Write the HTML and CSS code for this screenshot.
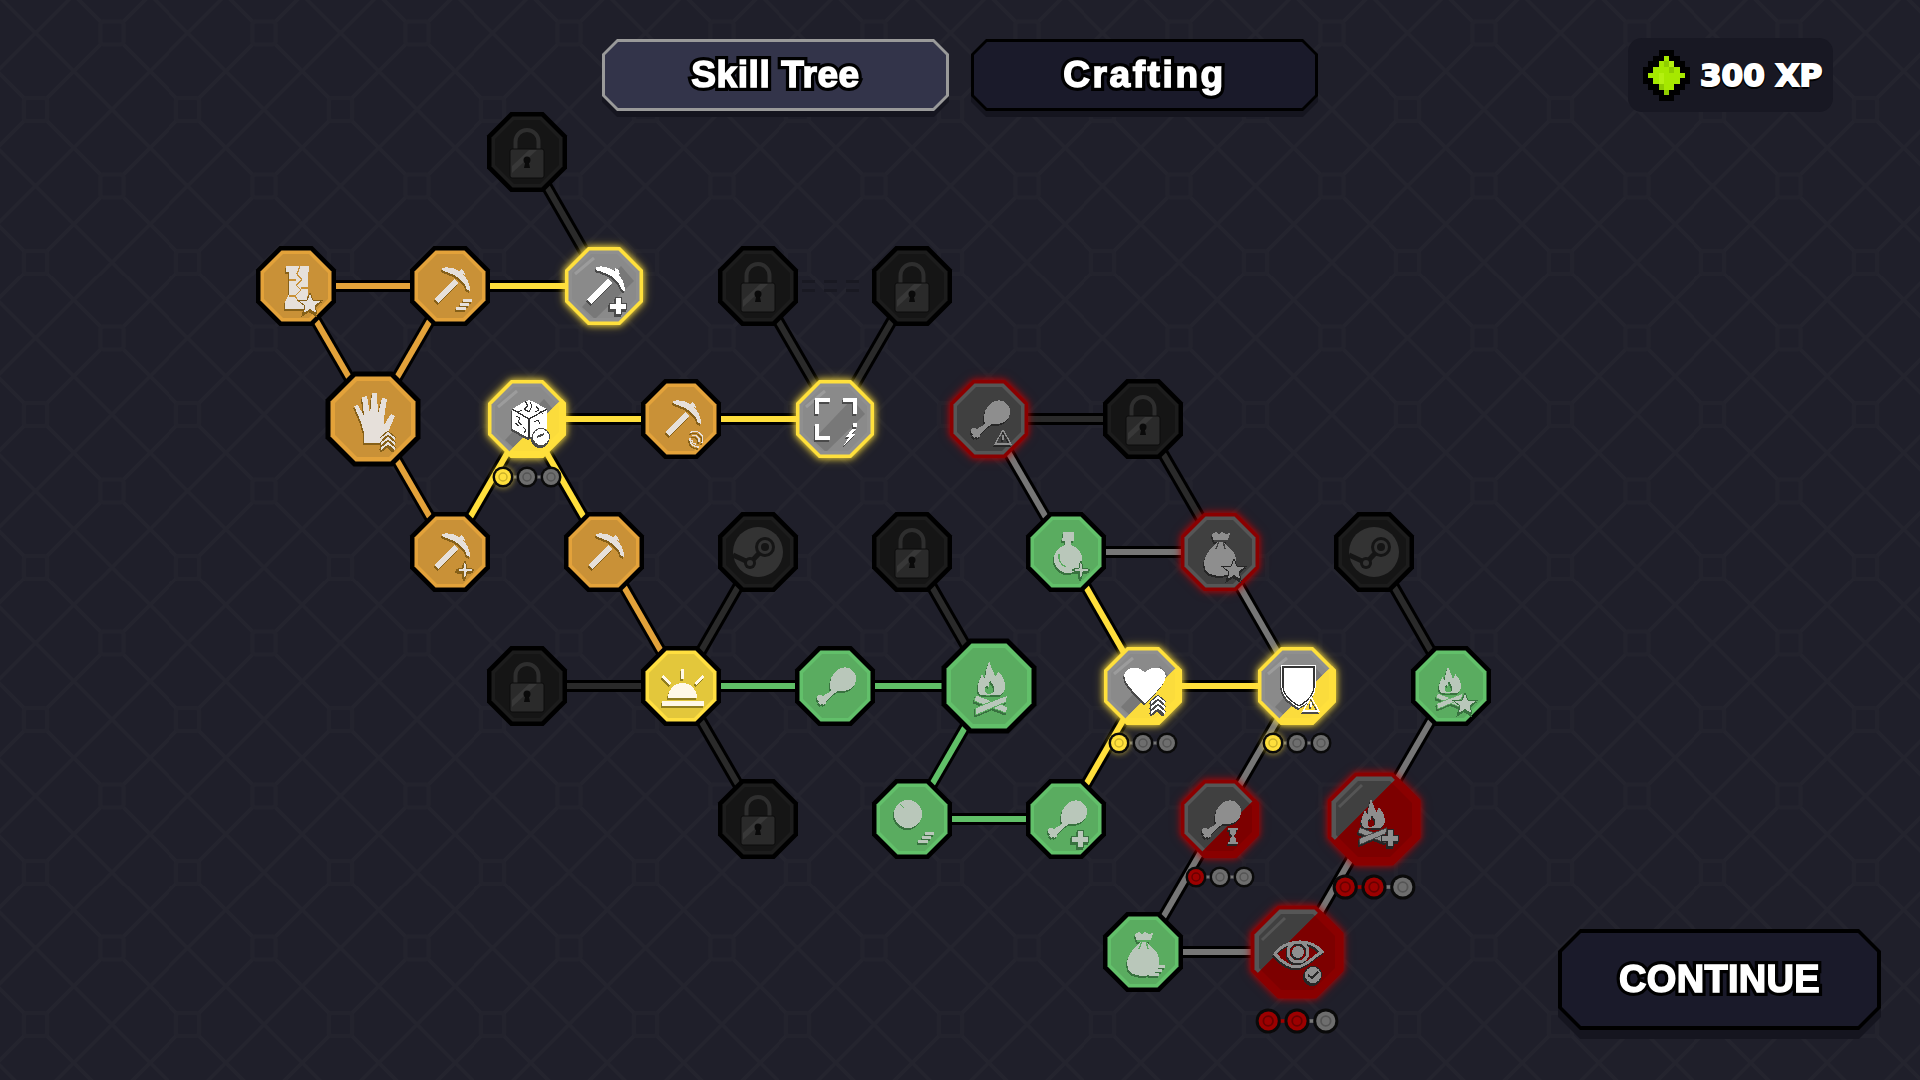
FILE: index.html
```html
<!DOCTYPE html>
<html lang="en">
<head>
    <meta charset="UTF-8">
    <meta name="viewport" content="width=device-width, initial-scale=1.0">
    <title>Skill Tree</title>
    <link rel="stylesheet" href="styles.css">
</head>
<body>
    <header class="topbar">
        <nav class="tabs">
            <button class="tab tab-active"><span class="tab-face"><span class="label" data-label="Skill Tree">Skill Tree</span></span></button>
            <button class="tab tab-wide"><span class="tab-face"><span class="label" data-label="Crafting">Crafting</span></span></button>
        </nav>
        <div class="xp">
            <svg class="gem" viewBox="0 0 9 9" preserveAspectRatio="none">
                <path class="gem-edge" d="M3 0h3v1h1v1h1v1h1v3h-1v1h-1v1h-1v1h-3v-1h-1v-1h-1v-1h-1v-3h1v-1h1v-1h1z"/>
                <path class="gem-lime" d="M4 1h1v1h1v1h1v1h1v1h-1v1h-1v1h-1v1h-1v-1h-1v-1h-1v-1h-1v-1h1v-1h1v-1h1z"/>
                <path class="gem-dark" d="M4 2h1v1h-1zM5 3h1v1h-1zM3 6h1v1h-1zM4 7h1v1h-1z"/>
                <path class="gem-light" d="M5 2h1v1h-1zM3 4h1v2h-1z"/>
            </svg>
            <span class="xp-text">300 XP</span>
        </div>
    </header>

    <main class="stage">
        <svg class="tree" width="1520" height="963" viewBox="0 117 1520 963">
            <defs>
                <clipPath id="third"><polygon points="62,-47 62,62 -47,62"/></clipPath>
                <clipPath id="twothirds"><polygon points="62,-80 62,62 -80,62"/></clipPath>
                <clipPath id="core-s"><polygon points="-13,-32 13,-32 32,-13 32,13 13,32 -13,32 -32,13 -32,-13"/></clipPath>
                <clipPath id="core-l"><polygon points="-16,-38 16,-38 38,-16 38,16 16,38 -16,38 -38,16 -38,-16"/></clipPath>

                <!-- node bodies -->
                <g id="oct-s">
                    <polygon class="rim" points="-16.500,-40 16.500,-40 40,-16.500 40,16.500 16.500,40 -16.500,40 -40,16.500 -40,-16.500"/>
                    <polygon class="band" points="-14.500,-35.500 14.500,-35.500 35.500,-14.500 35.500,14.500 14.500,35.500 -14.500,35.500 -35.500,14.500 -35.500,-14.500"/>
                    <polygon class="core" points="-13,-32 13,-32 32,-13 32,13 13,32 -13,32 -32,13 -32,-13"/>
                </g>
                <g id="oct-l">
                    <polygon class="rim" points="-19.500,-47.500 19.500,-47.500 47.500,-19.500 47.500,19.500 19.500,47.500 -19.500,47.500 -47.500,19.500 -47.500,-19.500"/>
                    <polygon class="band" points="-17.500,-42.500 17.500,-42.500 42.500,-17.500 42.500,17.500 17.500,42.500 -17.500,42.500 -42.500,17.500 -42.500,-17.500"/>
                    <polygon class="core" points="-16,-38 16,-38 38,-16 38,16 16,38 -16,38 -38,16 -38,-16"/>
                </g>
                <g id="sheen-s" clip-path="url(#core-s)">
                    <polygon class="sheen-dark" points="-22,21 -9,33 30,-5 17,-20"/>
                    <line class="sheen-light" x1="-29" y1="-12" x2="-10" y2="-28"/>
                </g>
                <g id="sheen-l" clip-path="url(#core-l)">
                    <line class="sheen-light" x1="-35" y1="-12" x2="-12" y2="-34"/>
                </g>

                <!-- main icons -->
                <g id="pick">
                    <path d="M-8-18C0-20 8-17 13-12 17-8 20-2 20 5L17 4C15-3 10-8 4-11 0-13-4-14-7-15Z"/>
                    <polygon points="11,-17 14,-15 15,-11 10,-14"/>
                    <polygon points="-16,13 -12,17 8,-3 4,-7"/>
                </g>
                <path id="drum" d="M-4 5C-6-2-5-9 1-15 6-20 15-20 19-14 23-8 21 0 15 3 10 6 6 5 3 5 1 6-1 8-3 9L-9 15C-8 18-11 20-13 18-15 20-18 17-16 15-19 14-19 10-16 9-14 8-13 9-12 10L-7 7Z"/>
                <g id="fire">
                    <path fill-rule="evenodd" d="M0-25C2-18 5-14 6-9 8-11 9-13 9-15 14-10 17-4 16 3 15 7 13 8 11 9L-8 9C-11 7-12 3-11-2-10-6-8-8-7-12-6-9-5-8-4-7-4-13-2-19 0-25ZM1-6C3-2 6 0 5 5 4 8-1 9-3 7-5 4-4 1-2-1-1 1 0 1 0 0 0-2 0-4 1-6Z"/>
                    <polygon class="log" points="-13,9 19,21 17,27 -15,15"/>
                    <polygon class="log" points="19,9 -14,22 -13,29 17,16"/>
                </g>
                <g id="lock">
                    <path class="shackle" d="M-11.500-3V-10.500A11.500 11.500 0 0 1 11.500-10.500V-3"/>
                    <rect class="lock-body" x="-17" y="-3" width="34" height="29" rx="2"/>
                    <polygon class="lock-sheen" points="-15,14 2,-2 10,-2 -15,21"/>
                    <circle class="lock-hole" cx="0" cy="8" r="3.500"/>
                    <polygon class="lock-hole" points="-1.500,9 1.500,9 3,16 -3,16"/>
                </g>
                <g id="steam">
                    <circle class="steam-disc" r="25"/>
                    <path class="steam-cut" d="M-25 3L-10 10M-8 11L7-5"/>
                    <circle class="steam-hole" cx="-8" cy="11" r="6"/>
                    <circle class="steam-disc" cx="-8" cy="11" r="3"/>
                    <circle class="steam-hole" cx="7" cy="-5" r="10"/>
                    <circle class="steam-disc" cx="7" cy="-5" r="7"/>
                    <circle class="steam-hole" cx="7" cy="-5" r="4"/>
                </g>
                <g id="boot">
                    <path d="M-10-20H13V-14H12V8L9 23H-11V16L-7 8V-14H-10Z"/>
                    <path class="cut" d="M4-20L1-12 6-6 0-1 5 4-1 10 3 16M-7-6H0M5 2H12M-7 10H-1"/>
                </g>
                <path id="hand" d="M-19-13L-15-14-9-3-11-22-6-23-3-5-1-26 4-26 5-5 9-21 14-20 11-1 11 6 18-5 22-3 15 13V24H-9V14L-12 3Z"/>
                <g id="sun">
                    <path d="M-13 12A14.500 15 0 0 1 16 12Z"/>
                    <rect x="-19" y="15" width="42" height="5"/>
                    <rect x="0" y="-17" width="3" height="10"/>
                    <polygon points="-20,-9 -18,-11 -10,-3 -12,-1"/>
                    <polygon points="23,-9 21,-11 13,-3 15,-1"/>
                </g>
                <g id="orb">
                    <circle cx="-4" cy="-5" r="14"/>
                    <path class="cut" d="M-12-15L-8-11"/>
                </g>
                <g id="flask">
                    <rect x="-3" y="-20" width="11" height="6"/>
                    <rect x="-4" y="-14" width="12" height="3"/>
                    <rect x="-1" y="-11" width="6" height="6"/>
                    <circle cx="2" cy="7" r="14"/>
                    <path class="cut" d="M-7 2C-8 8-5 13 0 15"/>
                </g>
                <g id="bag">
                    <path d="M-8-18L-4-20-1-18 2-20 6-18 10-19 8-12 3-10 8-6C14-1 17 5 16 12 15 20 10 24 0 24-10 24-16 20-16 12-16 5-12-1-6-6L-3-10-7-12Z"/>
                    <path class="cut" d="M-6-11H7M-1-11L-4-3M3-11L5-3"/>
                </g>
                <path id="heart" d="M2-13C-2-19-14-21-18-13-21-6-15 1 2 17 18 2 25-6 22-13 18-21 6-19 2-13Z"/>
                <g id="shield">
                    <path d="M-16-21H19V0C19 10 10 18 2 22-6 18-16 10-16 0Z"/>
                    <path class="cut" d="M-14-19H17V0C17 9 9 16 2 20-5 16-14 9-14 0Z"/>
                </g>
                <path id="frame" d="M-20-21H-5V-17H-16V-5H-20ZM8-21H22V-5H18V-17H8ZM-20 5H-16V17H-5V21H-20ZM18 4H22V8H18Z"/>
                <g id="cube">
                    <polygon points="2,-19 7,-17 20,-10 20,10 2,19 -15,10 -15,-10 -3,-17"/>
                    <path class="cut" d="M-15-10L2 0 20-10M2 0V19M-2-18L1-13-3-10 2-7 5-13 3-17M9-13L12-9 8-7M-11-3L-7-1-9 3-5 6M-12 4L-8 7M7 3L11 1 13 5M-4 8L-1 11-3 14M-9-7L-5-9M13-8L16-5"/>
                </g>
                <g id="eye">
                    <path class="eye-line" d="M-22 2C-13-11 12-16 25 0 14 6 10 14 0 15-8 15-16 9-22 2Z"/>
                    <circle class="eye-line" cx="1" cy="0" r="10"/>
                    <circle cx="1" cy="0" r="6"/>
                </g>

                <!-- small modifier marks, bottom right of a node -->
                <path id="m-stairs" d="M13 13h9v3h-9zM10 17h9v3h-9zM6 21h10v3h-10z"/>
                <path id="m-plus" class="mod" d="M11.500 12h5v5.500h5.500v5h-5.500v5h-5v-5h-5.500v-5h5.500z"/>
                <polygon id="m-star" class="mod" points="14,8 16.800,15 24,15.300 18.500,19.800 20.300,27 14,23 7.700,27 9.500,19.800 4,15.300 11.200,15"/>
                <polygon id="m-sparkle" class="mod" points="15,9 16.500,16.500 24,18 16.500,19.500 15,27 13.500,19.500 6,18 13.500,16.500"/>
                <g id="m-chev">
                    <path class="chev-back" d="M8 17L15 11 22 17M8 22L15 16 22 22M8 27L15 21 22 27"/>
                    <path class="chev" d="M8 17L15 11 22 17M8 22L15 16 22 22M8 27L15 21 22 27"/>
                </g>
                <g id="m-warn">
                    <polygon class="thin" points="14,11 22,25 6,25"/>
                    <path class="thin" d="M14 16V21"/>
                </g>
                <path id="m-glass" d="M8 9h10v2h-2v3l-2 3 2 3v3h2v2h-10v-2h2v-3l2-3-2-3v-3h-2z"/>
                <g id="m-check">
                    <circle class="mod" cx="16" cy="23" r="8"/>
                    <path class="cut-dark" d="M11 23L15 26 21 20"/>
                </g>
                <g id="m-coin">
                    <circle class="mod" cx="14" cy="18" r="8"/>
                    <path class="cut-dark" d="M10 18L17 15"/>
                </g>
                <path id="m-waves" class="thin" d="M9 14A8 8 0 0 1 21 24M11 17A5 5 0 0 1 18 23M9 19A8 8 0 0 0 18 28M11 21A4 4 0 0 0 15 25"/>
                <polygon id="m-bolt" points="17,10 11,18 14,18 9,26 21,15 17,15 21,10"/>

                <!-- progress dots -->
                <g id="pip">
                    <circle class="pip-rim" r="10.500"/>
                    <circle class="pip-ring" r="8"/>
                    <circle class="pip-hole" r="4"/>
                </g>

                <g id="links">
                    <line class="l-dark" x1="527" y1="152" x2="604" y2="286"/>
                    <line class="l-orange" x1="296" y1="286" x2="450" y2="286"/>
                    <line class="l-yellow" x1="450" y1="286" x2="604" y2="286"/>
                    <line class="l-orange" x1="296" y1="286" x2="373" y2="419"/>
                    <line class="l-orange" x1="450" y1="286" x2="373" y2="419"/>
                    <line class="l-orange" x1="373" y1="419" x2="450" y2="552"/>
                    <line class="l-yellow" x1="450" y1="552" x2="527" y2="419"/>
                    <line class="l-yellow" x1="527" y1="419" x2="604" y2="552"/>
                    <line class="l-yellow" x1="527" y1="419" x2="835" y2="419"/>
                    <line class="l-dark" x1="758" y1="286" x2="835" y2="419"/>
                    <line class="l-dark" x1="912" y1="286" x2="835" y2="419"/>
                    <line class="l-orange" x1="604" y1="552" x2="681" y2="686"/>
                    <line class="l-dark" x1="758" y1="552" x2="681" y2="686"/>
                    <line class="l-dark" x1="527" y1="686" x2="681" y2="686"/>
                    <line class="l-dark" x1="681" y1="686" x2="758" y2="819"/>
                    <line class="l-green" x1="681" y1="686" x2="989" y2="686"/>
                    <line class="l-dark" x1="912" y1="552" x2="989" y2="686"/>
                    <line class="l-green" x1="989" y1="686" x2="912" y2="819"/>
                    <line class="l-green" x1="912" y1="819" x2="1066" y2="819"/>
                    <line class="l-yellow" x1="1066" y1="819" x2="1143" y2="686"/>
                    <line class="l-yellow" x1="1143" y1="686" x2="1066" y2="552"/>
                    <line class="l-gray" x1="1066" y1="552" x2="989" y2="419"/>
                    <line class="l-dark" x1="989" y1="419" x2="1143" y2="419"/>
                    <line class="l-dark" x1="1143" y1="419" x2="1220" y2="552"/>
                    <line class="l-gray" x1="1066" y1="552" x2="1220" y2="552"/>
                    <line class="l-gray" x1="1220" y1="552" x2="1297" y2="686"/>
                    <line class="l-yellow" x1="1143" y1="686" x2="1297" y2="686"/>
                    <line class="l-gray" x1="1297" y1="686" x2="1220" y2="819"/>
                    <line class="l-gray" x1="1220" y1="819" x2="1143" y2="952"/>
                    <line class="l-gray" x1="1143" y1="952" x2="1297" y2="952"/>
                    <line class="l-gray" x1="1297" y1="952" x2="1374" y2="819"/>
                    <line class="l-gray" x1="1374" y1="819" x2="1451" y2="686"/>
                    <line class="l-dark" x1="1451" y1="686" x2="1374" y2="552"/>
                </g>
            </defs>

            <line class="l-faint" x1="802" y1="286" x2="868" y2="286"/>
            <line class="l-faint-in" x1="802" y1="286" x2="868" y2="286"/>
            <use href="#links" class="casing"/>
            <use href="#links"/>

            <!-- locked -->
            <g class="node st-lock" transform="translate(527 152)"><use href="#oct-s"/><use href="#lock"/></g>
            <g class="node st-lock" transform="translate(758 286)"><use href="#oct-s"/><use href="#lock"/></g>
            <g class="node st-lock" transform="translate(912 286)"><use href="#oct-s"/><use href="#lock"/></g>
            <g class="node st-lock" transform="translate(1143 419)"><use href="#oct-s"/><use href="#lock"/></g>
            <g class="node st-lock" transform="translate(912 552)"><use href="#oct-s"/><use href="#lock"/></g>
            <g class="node st-lock" transform="translate(527 686)"><use href="#oct-s"/><use href="#lock"/></g>
            <g class="node st-lock" transform="translate(758 819)"><use href="#oct-s"/><use href="#lock"/></g>
            <g class="node st-lock" transform="translate(758 552)"><use href="#oct-s"/><use href="#steam"/></g>
            <g class="node st-lock" transform="translate(1374 552)"><use href="#oct-s"/><use href="#steam"/></g>

            <!-- owned, orange -->
            <g class="node st-orange" transform="translate(296 286)"><use href="#oct-s"/><g class="ic"><use href="#boot"/><use href="#m-star"/></g></g>
            <g class="node st-orange" transform="translate(450 286)"><use href="#oct-s"/><g class="ic"><use href="#pick"/><use href="#m-stairs"/></g></g>
            <g class="node st-orange" transform="translate(373 419)"><use href="#oct-l"/><g class="ic"><use href="#hand"/><use href="#m-chev" transform="translate(0 3)"/></g></g>
            <g class="node st-orange" transform="translate(681 419)"><use href="#oct-s"/><g class="ic"><use href="#pick"/><use href="#m-waves"/></g></g>
            <g class="node st-orange" transform="translate(450 552)"><use href="#oct-s"/><g class="ic"><use href="#pick"/><use href="#m-sparkle"/></g></g>
            <g class="node st-orange" transform="translate(604 552)"><use href="#oct-s"/><g class="ic"><use href="#pick"/></g></g>

            <!-- owned, green and the gold one -->
            <g class="node st-gold" transform="translate(681 686)"><use href="#oct-s"/><g class="ic"><use href="#sun"/></g></g>
            <g class="node st-green" transform="translate(835 686)"><use href="#oct-s"/><g class="ic"><use href="#drum"/></g></g>
            <g class="node st-green" transform="translate(989 686)"><use href="#oct-l"/><g class="ic"><use href="#fire"/></g></g>
            <g class="node st-green" transform="translate(912 819)"><use href="#oct-s"/><g class="ic"><use href="#orb"/><use href="#m-stairs"/></g></g>
            <g class="node st-green" transform="translate(1066 819)"><use href="#oct-s"/><g class="ic"><use href="#drum"/><use href="#m-plus"/></g></g>
            <g class="node st-green" transform="translate(1066 552)"><use href="#oct-s"/><g class="ic"><use href="#flask"/><use href="#m-sparkle"/></g></g>
            <g class="node st-green" transform="translate(1451 686)"><use href="#oct-s"/><g class="ic"><use href="#fire" transform="translate(-3 0) scale(.8)"/><use href="#m-star"/></g></g>
            <g class="node st-green" transform="translate(1143 952)"><use href="#oct-s"/><g class="ic"><use href="#bag"/><use href="#m-stairs"/></g></g>

            <!-- available, yellow edge -->
            <g class="node st-lit" transform="translate(604 286)"><use href="#oct-s"/><use href="#sheen-s"/><g class="ic"><use href="#pick" transform="scale(1.05)"/><use href="#m-plus"/></g></g>
            <g class="node st-lit" transform="translate(835 419)"><use href="#oct-s"/><use href="#sheen-s"/><g class="ic"><use href="#frame"/><use href="#m-bolt"/></g></g>
            <g class="node st-lit" transform="translate(527 419)"><use href="#oct-s"/><use href="#sheen-s"/><g class="fill-lit" clip-path="url(#third)"><use href="#oct-s"/></g><g class="ic"><use href="#cube"/><use href="#m-coin"/></g></g>
            <g class="node st-lit" transform="translate(1143 686)"><use href="#oct-s"/><use href="#sheen-s"/><g class="fill-lit" clip-path="url(#third)"><use href="#oct-s"/></g><g class="ic"><use href="#heart"/><use href="#m-chev"/></g></g>
            <g class="node st-lit" transform="translate(1297 686)"><use href="#oct-s"/><use href="#sheen-s"/><g class="fill-lit" clip-path="url(#third)"><use href="#oct-s"/></g><g class="ic"><use href="#shield"/><use href="#m-warn"/></g></g>

            <!-- not affordable, red edge -->
            <g class="node st-dim" transform="translate(989 419)"><use href="#oct-s"/><g class="ic"><use href="#drum"/><use href="#m-warn"/></g></g>
            <g class="node st-dim" transform="translate(1220 552)"><use href="#oct-s"/><g class="ic"><use href="#bag"/><use href="#m-star"/></g></g>
            <g class="node st-dim" transform="translate(1220 819)"><use href="#oct-s"/><g class="fill-red" clip-path="url(#third)"><use href="#oct-s"/></g><g class="ic"><use href="#drum"/><use href="#m-glass"/></g></g>
            <g class="node st-dim" transform="translate(1374 819)"><use href="#oct-l"/><use href="#sheen-l"/><g class="fill-red" clip-path="url(#twothirds)"><use href="#oct-l"/></g><g class="ic"><use href="#fire" transform="translate(-3 1) scale(.85)"/><use href="#m-plus" transform="translate(2 -1)"/></g></g>
            <g class="node st-dim" transform="translate(1297 952)"><use href="#oct-l"/><use href="#sheen-l"/><g class="fill-red" clip-path="url(#twothirds)"><use href="#oct-l"/></g><g class="ic"><use href="#eye"/><use href="#m-check"/></g></g>

            <!-- progress dots under upgraded nodes -->
            <g class="pips" transform="translate(527 477)">
                <line class="pip-link" x1="-24" x2="24"/>
                <use class="pip-yellow" href="#pip" x="-24"/><use href="#pip"/><use href="#pip" x="24"/>
            </g>
            <g class="pips" transform="translate(1143 743)">
                <line class="pip-link" x1="-24" x2="24"/>
                <use class="pip-yellow" href="#pip" x="-24"/><use href="#pip"/><use href="#pip" x="24"/>
            </g>
            <g class="pips" transform="translate(1297 743)">
                <line class="pip-link" x1="-24" x2="24"/>
                <use class="pip-yellow" href="#pip" x="-24"/><use href="#pip"/><use href="#pip" x="24"/>
            </g>
            <g class="pips" transform="translate(1220 877)">
                <line class="pip-link" x1="-24" x2="24"/>
                <use class="pip-red" href="#pip" x="-24"/><use href="#pip"/><use href="#pip" x="24"/>
            </g>
            <g class="pips" transform="translate(1374 887) scale(1.2)">
                <line class="pip-link" x1="0" x2="24"/><line class="pip-link-red" x1="-24" x2="0"/>
                <use class="pip-red" href="#pip" x="-24"/><use class="pip-red" href="#pip"/><use href="#pip" x="24"/>
            </g>
            <g class="pips" transform="translate(1297 1021) scale(1.2)">
                <line class="pip-link" x1="0" x2="24"/><line class="pip-link-red" x1="-24" x2="0"/>
                <use class="pip-red" href="#pip" x="-24"/><use class="pip-red" href="#pip"/><use href="#pip" x="24"/>
            </g>
        </svg>

        <div class="continue-wrap">
            <button class="continue"><span class="continue-face"><span class="label" data-label="CONTINUE">CONTINUE</span></span></button>
        </div>
    </main>
</body>
</html>
```

FILE: styles.css
```css
* {
    box-sizing: border-box;
}
body {
    margin: 0;
    width: 1920px;
    height: 1080px;
    overflow: hidden;
    background-color: #1f1f2a;
    background-image: url("data:image/svg+xml,%3Csvg xmlns='http://www.w3.org/2000/svg' width='152.5' height='152.5'%3E%3Cg fill='none' stroke='%2324242e' stroke-width='3.5' stroke-linecap='square'%3E%3Cpath d='M0 0L152.5 152.5M76.25 0L152.5 76.25M0 76.25L76.25 152.5M152.500 0L0 152.5M76.25 0L0 76.25M152.5 76.25L76.25 152.5'/%3E%3Cg fill='%231f1f2a' stroke='%2323232d' stroke-width='4'%3E%3Crect x='-11.500' y='-11.500' width='23' height='23' rx='3'/%3E%3Crect x='141' y='-11.500' width='23' height='23' rx='3'/%3E%3Crect x='-11.500' y='141' width='23' height='23' rx='3'/%3E%3Crect x='141' y='141' width='23' height='23' rx='3'/%3E%3Crect x='64.750' y='64.750' width='23' height='23' rx='3'/%3E%3C/g%3E%3C/g%3E%3C/svg%3E");
    background-size: 152.5px 152.5px;
    background-position: 111.7px 33.3px;
    font-family: "Liberation Sans", Arial, sans-serif;
    color: #fff;
}

/* top row */
.topbar {
    display: grid;
    grid-template-columns: 1fr auto 1fr;
    height: 117px;
    padding-top: 39px;
}
.tabs {
    grid-column: 2;
    display: flex;
    gap: 22px;
    align-items: flex-start;
    filter: drop-shadow(0 6px 0 #15151f);
}
.tab,
.continue {
    --cut: 15px;
    --edge: #000;
    --face: #1a1a2a;
    --inner: calc(var(--cut) - 2px);
    display: block;
    border: none;
    background: var(--edge);
    cursor: pointer;
    color: #fff;
    font-family: inherit;
    font-weight: bold;
    clip-path: polygon(var(--cut) 0, calc(100% - var(--cut)) 0, 100% var(--cut), 100% calc(100% - var(--cut)), calc(100% - var(--cut)) 100%, var(--cut) 100%, 0 calc(100% - var(--cut)), 0 var(--cut));
}
.tab {
    width: 347px;
    height: 72px;
    padding: 3px;
    font-size: 37px;
    letter-spacing: 0.6px;
}
.tab-wide {
    letter-spacing: 2.6px;
}
.tab-active {
    --edge: #9a9a9a;
    --face: #33344a;
}
.tab-face,
.continue-face {
    display: flex;
    align-items: center;
    justify-content: center;
    width: 100%;
    height: 100%;
    background: var(--face);
    clip-path: polygon(var(--inner) 0, calc(100% - var(--inner)) 0, 100% var(--inner), 100% calc(100% - var(--inner)), calc(100% - var(--inner)) 100%, var(--inner) 100%, 0 calc(100% - var(--inner)), 0 var(--inner));
}
.label {
    position: relative;
    isolation: isolate;
    white-space: nowrap;
    -webkit-text-stroke: 1.5px #fff;
}
.label::before {
    content: attr(data-label);
    position: absolute;
    left: 0;
    top: 0;
    z-index: -1;
    color: #000;
    -webkit-text-stroke: 8px #000;
    text-shadow: 0 2px 0 #000;
}
.xp {
    grid-column: 3;
    justify-self: end;
    display: flex;
    align-items: center;
    gap: 10px;
    width: 205px;
    height: 74px;
    margin: -1px 87px 0 0;
    padding-left: 15px;
    background: #181823;
    border-radius: 14px;
}
.gem {
    width: 47px;
    height: 51px;
    flex: none;
    shape-rendering: crispEdges;
}
.gem-edge { fill: #000; }
.gem-lime { fill: #a6e800; }
.gem-dark { fill: #8fcc00; }
.gem-light { fill: #b4f010; }
.xp-text {
    font-family: "DejaVu Sans", sans-serif;
    font-weight: bold;
    font-size: 31px;
    white-space: nowrap;
    -webkit-text-stroke: 2px #fff;
    text-shadow: 0 3px 0 #000, 2px 1px 0 #000, -2px 1px 0 #000;
}

/* tree and the button beside it */
.stage {
    display: flex;
    justify-content: space-between;
    align-items: flex-end;
    height: 963px;
    padding: 0 39px 50px 0;
}
.tree {
    flex: none;
    align-self: flex-start;
    overflow: visible;
}
.continue-wrap {
    filter: drop-shadow(0 9px 0 #15151f);
}
.continue {
    --cut: 22px;
    --inner: 19px;
    width: 323px;
    height: 101px;
    padding: 4px;
    font-size: 38px;
    letter-spacing: 0.3px;
}

/* links */
.l-orange, .l-yellow, .l-green, .l-gray, .l-dark {
    stroke-width: var(--w, 6px);
}
.casing {
    --case: #000;
    --w: 12px;
}
.l-orange { stroke: var(--case, #e3a23a); }
.l-yellow { stroke: var(--case, #ffdf3c); }
.l-green { stroke: var(--case, #60c068); }
.l-gray { stroke: var(--case, #767676); }
.l-dark { stroke: var(--case, #2a2a2a); }
.l-faint {
    stroke: #191922;
    stroke-width: 12px;
    stroke-dasharray: 13 9;
}
.l-faint-in {
    stroke: #20202b;
    stroke-width: 6px;
    stroke-dasharray: 13 9;
}

/* nodes */
.rim {
    fill: var(--rim);
    transform: scale(var(--rim-scale, 1));
}
.band { fill: var(--band); }
.core { fill: var(--core); }
.st-orange {
    --rim: #000; --band: #e3a23a; --core: #c99137;
    --ink: #e6e0da; --shade: #866018; --cut-color: #c99137;
}
.st-green {
    --rim: #000; --band: #62c06a; --core: #5aac60;
    --ink: #b9c7ba; --shade: #38723f; --cut-color: #5aac60;
}
.st-gold {
    --rim: #000; --band: #ffdf40; --core: #e3c73b;
    --ink: #fff8e6; --shade: #8f7d1f; --cut-color: #e3c73b;
}
.st-lock {
    --rim: #000; --band: #1c1c1c; --core: #151515;
}
.st-lit {
    --rim: #ffe03c; --band: #8f8f8f; --core: #8a8a8a; --rim-scale: 0.975;
    --ink: #fff; --shade: #4a4a4a; --cut-color: #333;
    filter: drop-shadow(0 0 3px rgba(255, 224, 60, 0.9)) drop-shadow(0 0 5px rgba(255, 224, 60, 0.45));
}
.st-dim {
    --rim: #8a0000; --band: #565656; --core: #404040; --rim-scale: 0.975;
    --ink: #8e8e8e; --shade: #262626; --cut-color: #404040;
    filter: drop-shadow(0 0 3px rgba(200, 0, 0, 0.8)) drop-shadow(0 0 5px rgba(200, 0, 0, 0.35));
}
.fill-lit { --band: #ffe03c; --core: #fbdc3c; --rim: #ffe03c; }
.fill-red { --band: #8a0000; --core: #7d0000; --rim: #8a0000; }
.sheen-dark { fill: #787878; }
.sheen-light {
    stroke: #9c9c9c;
    stroke-width: 3px;
}
#sheen-l .sheen-light { stroke: #555; }

/* icons */
.ic {
    fill: var(--ink);
    shape-rendering: crispEdges;
    filter: drop-shadow(-1px 2px 0 var(--shade));
}
.mod {
    stroke: var(--shade);
    stroke-width: 2px;
    paint-order: stroke;
}
.cut {
    fill: none;
    stroke: var(--cut-color);
    stroke-width: 1.3px;
}
.cut-dark {
    fill: none;
    stroke: var(--shade);
    stroke-width: 2px;
}
.log {
    stroke: var(--cut-color);
    stroke-width: 1px;
}
.thin {
    fill: none;
    stroke: var(--ink);
    stroke-width: 1.3px;
}
.chev {
    fill: none;
    stroke: var(--ink);
    stroke-width: 2px;
}
.chev-back {
    fill: none;
    stroke: var(--shade);
    stroke-width: 4px;
}
.eye-line {
    fill: none;
    stroke: var(--ink);
    stroke-width: 3px;
}

/* padlock and steam badge keep their own greys */
.shackle {
    fill: none;
    stroke: #2e2e2e;
    stroke-width: 4px;
}
.lock-body {
    fill: #2a2a2a;
    stroke: #0c0c0c;
    stroke-width: 1px;
}
.lock-sheen { fill: #383838; }
.lock-hole { fill: #0a0a0a; }
.steam-disc { fill: #333; }
.steam-hole { fill: #151515; }
.steam-cut {
    fill: none;
    stroke: #151515;
    stroke-width: 5px;
}

/* progress dots */
.pip-rim { fill: #0a0a0a; }
.pip-ring { fill: var(--ring, #6e6e6e); }
.pip-hole {
    fill: var(--ring, #6e6e6e);
    stroke: var(--hole, #555);
    stroke-width: 1.5px;
}
.pip-link {
    stroke: #777;
    stroke-width: 3px;
}
.pip-link-red {
    stroke: #a00000;
    stroke-width: 3px;
}
.pip-yellow {
    --ring: #ffe03c;
    --hole: #cdb22c;
    filter: drop-shadow(0 0 3px rgba(255, 224, 60, 0.7));
}
.pip-red {
    --ring: #9c0000;
    --hole: #6a0000;
}
```
